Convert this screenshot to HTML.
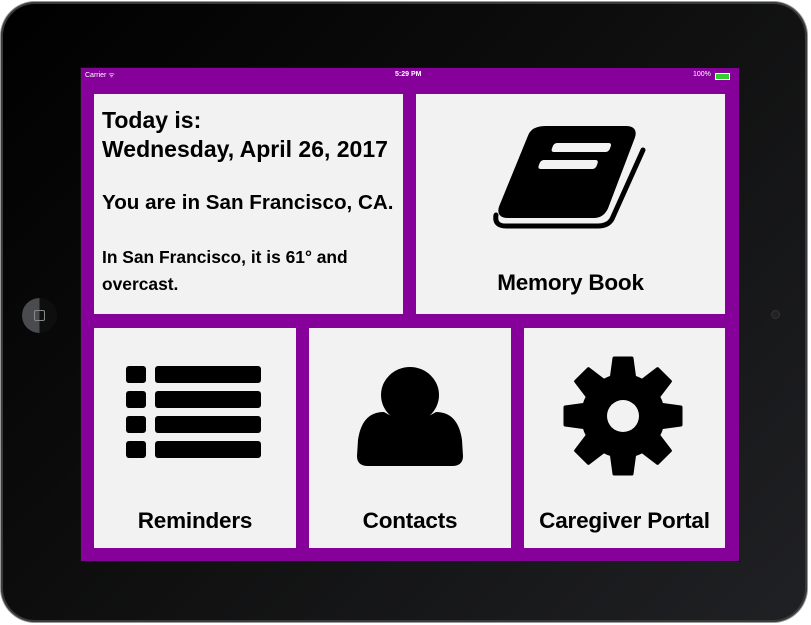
<!DOCTYPE html>
<html><head><style>
html,body{margin:0;padding:0;width:811px;height:625px;background:#fff;overflow:hidden}
.ipad{position:absolute;left:1px;top:2px;width:806px;height:620px;border-radius:34px;background:linear-gradient(135deg,#000 0%,#0c0c0c 40%,#202124 100%);box-shadow:0 0 0 1px #9a9a9a,inset 0 0 0 2px #3a3a3a}
.screen{position:absolute;left:81px;top:68px;width:658px;height:493px;background:#86009a;outline:1px solid #111}
.sb{position:absolute;top:3px;font:7px "Liberation Sans",sans-serif;color:#fff}
.card{position:absolute;background:#f2f2f2;font-family:"Liberation Sans",sans-serif;color:#000}
.lbl{position:absolute;left:0;right:0;text-align:center;font-size:22.5px;font-weight:bold;letter-spacing:-0.2px}
.t{position:absolute;left:8px;font-weight:bold;white-space:nowrap}
.home{position:absolute;left:21px;top:296px;width:35px;height:35px;border-radius:50%;background:linear-gradient(90deg,#4a4b4e 50%,#0e0e0e 50%)}
.home div{position:absolute;left:12px;top:12px;width:9px;height:9px;border:1px solid #888;border-radius:2px}
</style></head><body>
<div class="ipad">
<div class="home"><div></div></div>
<div style="position:absolute;left:770px;top:308px;width:7px;height:7px;border-radius:50%;background:#222;border:1px solid #333"></div>
</div>
<div class="screen">
<div class="sb" style="left:4px">Carrier ᯤ</div>
<div class="sb" style="left:314px;font-weight:bold">5:29 PM</div>
<div class="sb" style="left:612px">100%</div>
<div style="position:absolute;left:634px;top:5px;width:13px;height:5px;background:#3c3;border:1px solid #fff"></div>
<div class="card" style="left:13px;top:26px;width:309px;height:220px">
<div class="t" style="top:13px;font-size:23px">Today is:</div>
<div class="t" style="top:42px;font-size:23px">Wednesday, April 26, 2017</div>
<div class="t" style="top:97px;font-size:20.6px">You are in San Francisco, CA.</div>
<div class="t" style="top:150px;font-size:17.4px;line-height:27px">In San Francisco, it is 61° and<br>overcast.</div>
</div>
<div class="card" style="left:335px;top:26px;width:309px;height:220px">
<svg width="309" height="220" style="position:absolute;left:0;top:0">
<g transform="translate(-416,-94)">
<path d="M546 128 L626 128 Q636 128 633 137 L606 208 Q602 216 594 216 L508 216 Q498 216 501 207 L530 136 Q533 128 546 128 Z" fill="#000" stroke="#000" stroke-width="4" stroke-linejoin="round"/>
<path d="M643 150 L612 219 Q608 226 598 226 L506 226 Q494 226 496 215" fill="none" stroke="#000" stroke-width="5" stroke-linecap="round"/>
<rect x="551" y="143" width="58" height="9" rx="3" fill="#f2f2f2" transform="skewX(-20) translate(55,0)"/>
<rect x="544" y="160" width="58" height="9" rx="3" fill="#f2f2f2" transform="skewX(-20) translate(55,0)"/>
</g></svg>
<div class="lbl" style="top:176px">Memory Book</div>
</div>
<div class="card" style="left:13px;top:260px;width:202px;height:220px">
<svg width="202" height="150" style="position:absolute;left:0;top:0">
<g transform="translate(-94,-328)" fill="#000">
<rect x="126" y="366" width="20" height="17" rx="3"/><rect x="155" y="366" width="106" height="17" rx="3"/>
<rect x="126" y="391" width="20" height="17" rx="3"/><rect x="155" y="391" width="106" height="17" rx="3"/>
<rect x="126" y="416" width="20" height="17" rx="3"/><rect x="155" y="416" width="106" height="17" rx="3"/>
<rect x="126" y="441" width="20" height="17" rx="3"/><rect x="155" y="441" width="106" height="17" rx="3"/>
</g></svg>
<div class="lbl" style="top:180px">Reminders</div>
</div>
<div class="card" style="left:228px;top:260px;width:202px;height:220px">
<svg width="202" height="150" style="position:absolute;left:0;top:0">
<g transform="translate(-309,-328)" fill="#000">
<ellipse cx="410" cy="395" rx="29" ry="28"/>
<path d="M384 412 Q410 428 436 412 Q458 412 462 440 L463 456 Q463 466 452 466 L368 466 Q357 466 357 456 L358 440 Q362 412 384 412 Z"/>
</g></svg>
<div class="lbl" style="top:180px">Contacts</div>
</div>
<div class="card" style="left:443px;top:260px;width:201px;height:220px">
<svg width="201" height="150" style="position:absolute;left:0;top:0">
<g transform="translate(-524,-328) translate(623,416)" fill="#000">
<circle r="42"/>
<g id="t"><path d="M-9 -58 L9 -58 L12 -36 L-12 -36 Z" stroke="#000" stroke-width="3" stroke-linejoin="round"/></g>
<use href="#t" transform="rotate(45)"/><use href="#t" transform="rotate(90)"/><use href="#t" transform="rotate(135)"/>
<use href="#t" transform="rotate(180)"/><use href="#t" transform="rotate(225)"/><use href="#t" transform="rotate(270)"/><use href="#t" transform="rotate(315)"/>
<circle r="16" fill="#f2f2f2"/>
</g></svg>
<div class="lbl" style="top:180px">Caregiver Portal</div>
</div>
</div>
</body></html>
